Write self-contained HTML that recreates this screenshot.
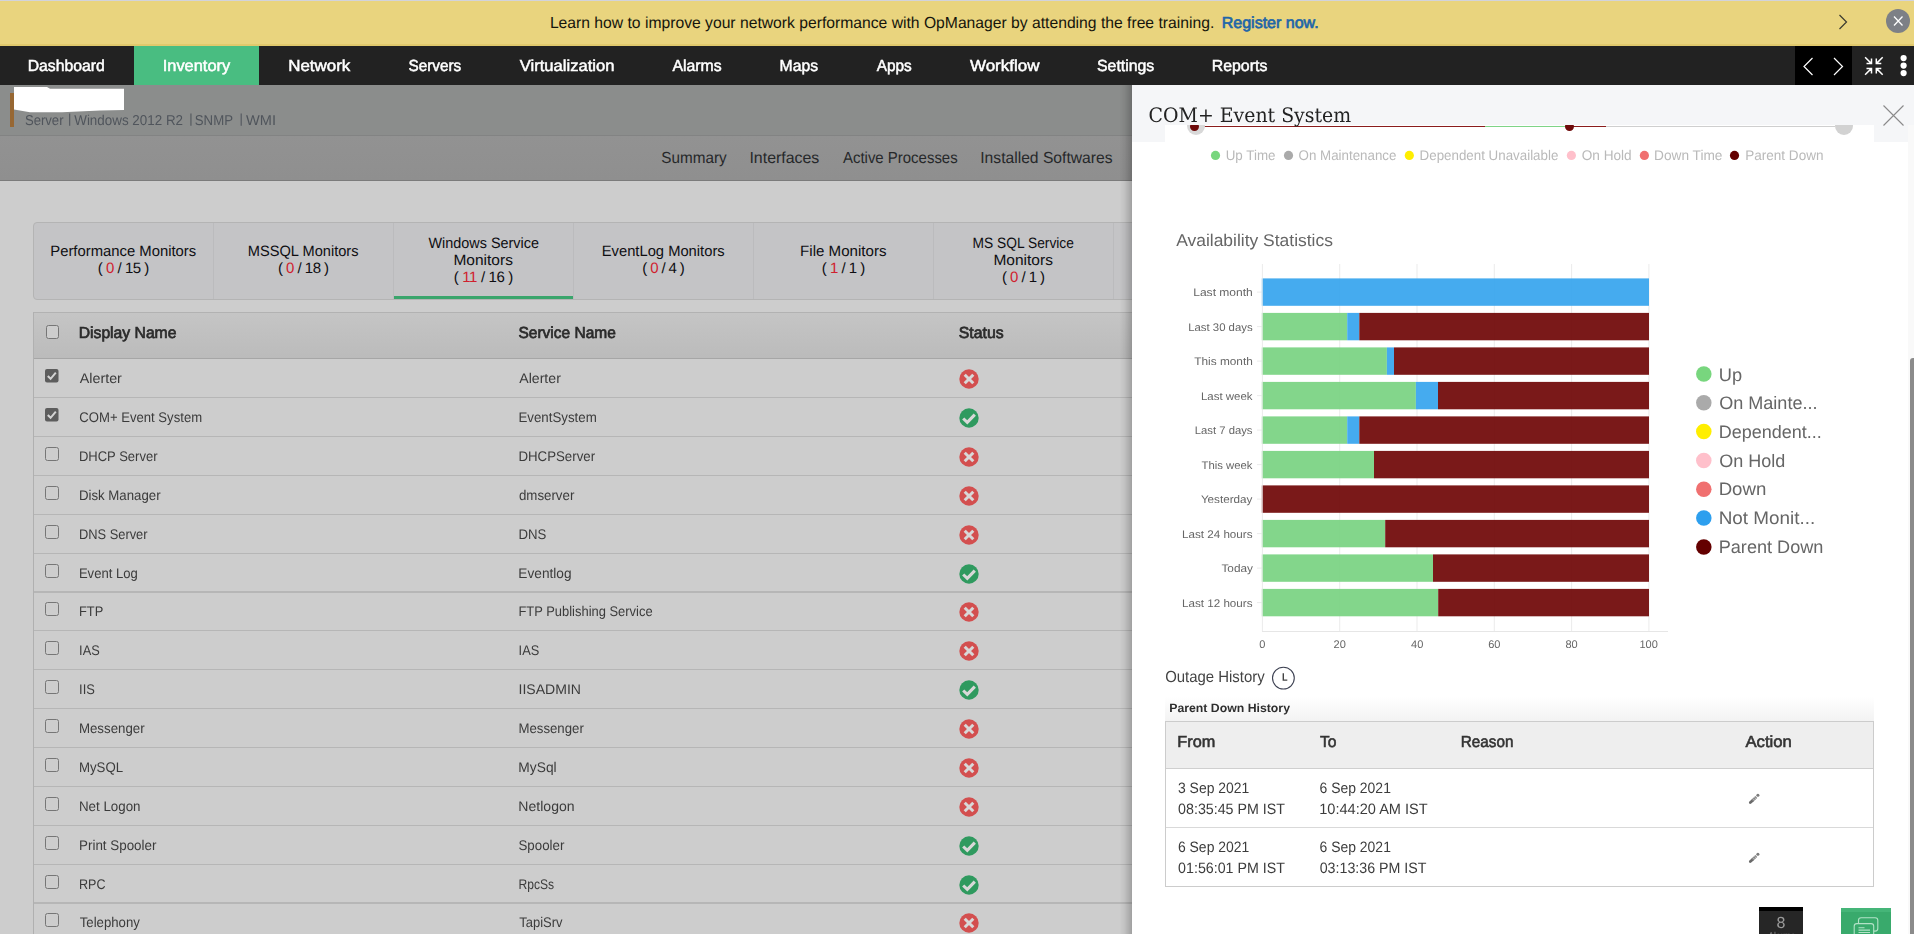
<!DOCTYPE html>
<html lang="en"><head><meta charset="utf-8"><title>OpManager - COM+ Event System</title>
<style>
html,body{margin:0;padding:0}
body{width:1914px;height:934px;overflow:hidden;position:relative;background:#cdcdcd;font-family:'Liberation Sans',sans-serif}
div,span,a,b,i,svg{position:absolute;box-sizing:border-box}
.g{left:0;top:0;width:0;height:0}
.gy{will-change:transform}
.t{white-space:pre;transform-origin:0 50%;text-rendering:geometricPrecision}
a{text-decoration:none}
</style></head><body>
<div class="g" id="banner">
<div style="left:0px;top:0px;width:1914px;height:1px;background:#d2d3db;"></div>
<div style="left:0px;top:1px;width:1914px;height:45px;background:#e9d47e;border-bottom:2px solid #e1c96c;"></div>
<span class="t" style="left:549px;top:16px;font-size:16px;line-height:16px;color:#15150c;transform:translateX(0.90px) scaleX(0.9803);">Learn how to improve your network performance with OpManager by attending the free training.</span>
<a class="t" style="left:1221.77px;top:16px;font-size:16px;line-height:16px;color:#1f66a8;-webkit-text-stroke:0.7px #1f66a8;">Register now.</a>
<svg style="left:1835px;top:12px" width="16" height="20" viewBox="0 0 16 20"><path d="M4.5 3 L11.5 10 L4.5 17" fill="none" stroke="#3a3a30" stroke-width="1.2"/></svg>
<div style="left:1886px;top:9px;width:24px;height:24px;border-radius:50%;background:#7d8086"></div>
<svg style="left:1886px;top:9px" width="24" height="24" viewBox="0 0 24 24"><path d="M8 7.5 L16.5 16.5 M16.5 7.5 L8 16.5" fill="none" stroke="#fff" stroke-width="1.3"/></svg>
</div>
<div class="g gy" id="nav">
<div style="left:0px;top:46px;width:1914px;height:39px;background:#222222;"></div>
<div style="left:134px;top:46px;width:125px;height:39px;background:#49bd81;"></div>
<div style="left:1795px;top:46px;width:57px;height:39px;background:#000;"></div>
<span class="t" style="left:27px;top:59px;font-size:16px;line-height:16px;color:#fff;transform:translateX(0.69px) scaleX(0.9841);-webkit-text-stroke:0.5px #fff;">Dashboard</span>
<span class="t" style="left:162px;top:59px;font-size:16px;line-height:16px;color:#fff;transform:translateX(0.69px) scaleX(1.0257);-webkit-text-stroke:0.5px #fff;">Inventory</span>
<span class="t" style="left:288px;top:59px;font-size:16px;line-height:16px;color:#fff;transform:translateX(0.19px) scaleX(1.0584);-webkit-text-stroke:0.5px #fff;">Network</span>
<span class="t" style="left:408px;top:59px;font-size:16px;line-height:16px;color:#fff;transform:translateX(0.42px) scaleX(0.9573);-webkit-text-stroke:0.5px #fff;">Servers</span>
<span class="t" style="left:519px;top:59px;font-size:16px;line-height:16px;color:#fff;transform:translateX(0.79px) scaleX(1.0360);-webkit-text-stroke:0.5px #fff;">Virtualization</span>
<span class="t" style="left:672px;top:59px;font-size:16px;line-height:16px;color:#fff;transform:translateX(0.44px) scaleX(0.9882);-webkit-text-stroke:0.5px #fff;">Alarms</span>
<span class="t" style="left:779px;top:59px;font-size:16px;line-height:16px;color:#fff;transform:translateX(0.60px) scaleX(0.9815);-webkit-text-stroke:0.5px #fff;">Maps</span>
<span class="t" style="left:876px;top:59px;font-size:16px;line-height:16px;color:#fff;transform:translateX(0.65px) scaleX(0.9606);-webkit-text-stroke:0.5px #fff;">Apps</span>
<span class="t" style="left:969px;top:59px;font-size:16px;line-height:16px;color:#fff;transform:translateX(0.94px) scaleX(1.0607);-webkit-text-stroke:0.5px #fff;">Workflow</span>
<span class="t" style="left:1096px;top:59px;font-size:16px;line-height:16px;color:#fff;transform:translateX(0.98px) scaleX(0.9911);-webkit-text-stroke:0.5px #fff;">Settings</span>
<span class="t" style="left:1211px;top:59px;font-size:16px;line-height:16px;color:#fff;transform:translateX(0.68px) scaleX(0.9935);-webkit-text-stroke:0.5px #fff;">Reports</span>
<svg style="left:1795px;top:46px" width="57" height="39" viewBox="0 0 57 39"><path d="M17.5 12 L9 20.5 L17.5 29 M39 12 L47.5 20.5 L39 29" fill="none" stroke="#fff" stroke-width="1.2"/></svg>
<svg style="left:1860px;top:52px" width="28" height="28" viewBox="1860 52 28 28"><path d="M1865.1 57.2 L1871.5 63.6 M1866.5 63.6 L1871.5 63.6 L1871.5 58.6 M1865.1 74.8 L1871.5 68.4 M1866.5 68.4 L1871.5 68.4 L1871.5 73.4 M1882.7 57.2 L1876.3 63.6 M1881.3 63.6 L1876.3 63.6 L1876.3 58.6 M1882.7 74.8 L1876.3 68.4 M1881.3 68.4 L1876.3 68.4 L1876.3 73.4 " fill="none" stroke="#fff" stroke-width="1.5"/></svg>
<svg style="left:1898px;top:52px" width="12" height="28" viewBox="1898 52 12 28"><circle cx="1903.6" cy="58.1" r="3.1" fill="#fff"/><circle cx="1903.6" cy="65.6" r="3.1" fill="#fff"/><circle cx="1903.6" cy="73.1" r="3.1" fill="#fff"/></svg>
</div>
<div class="g" id="devhead">
<div style="left:0px;top:85px;width:1132px;height:50px;background:#8b8d8c;"></div>
<div style="left:0px;top:135px;width:1132px;height:1px;background:#828383;"></div>
<div style="left:0px;top:136px;width:1132px;height:45px;background:linear-gradient(#929292,#8f8f8f);border-bottom:1px solid #7b7b7b;"></div>
<div style="left:10px;top:93px;width:4px;height:34px;background:#976733;"></div>
<svg style="left:10px;top:84px" width="120" height="32" viewBox="10 84 120 32"><path d="M14 87 L47 87 L50 88.7 L124 88.7 L124 110 L100 110.4 L62 112.2 L30 112.2 L14 109.6 Z" fill="#fff"/></svg>
<span class="t" style="left:24px;top:114px;font-size:14.3px;line-height:15px;color:#50555c;transform:translateX(0.90px) scaleX(0.9175);">Server</span>
<span class="t" style="left:68.00px;top:112px;font-size:13px;line-height:13px;color:#50555c;">|</span>
<span class="t" style="left:74px;top:114px;font-size:14.3px;line-height:15px;color:#50555c;transform:translateX(0.23px) scaleX(0.9378);">Windows 2012 R2</span>
<span class="t" style="left:189.20px;top:112px;font-size:13px;line-height:13px;color:#50555c;">|</span>
<span class="t" style="left:194px;top:114px;font-size:14.3px;line-height:15px;color:#50555c;transform:translateX(0.79px) scaleX(0.9245);">SNMP</span>
<span class="t" style="left:239.50px;top:112px;font-size:13px;line-height:13px;color:#50555c;">|</span>
<span class="t" style="left:245px;top:114px;font-size:14.3px;line-height:15px;color:#50555c;transform:translateX(1.00px) scaleX(1.0196);">WMI</span>
<span class="t" style="left:661px;top:151px;font-size:16px;line-height:16px;color:#26282a;transform:translateX(0.32px) scaleX(0.9545);">Summary</span>
<span class="t" style="left:749px;top:151px;font-size:16px;line-height:16px;color:#26282a;transform:translateX(0.43px) scaleX(0.9949);">Interfaces</span>
<span class="t" style="left:842px;top:151px;font-size:16px;line-height:16px;color:#26282a;transform:translateX(0.96px) scaleX(0.9346);">Active Processes</span>
<span class="t" style="left:980px;top:151px;font-size:16px;line-height:16px;color:#26282a;transform:translateX(0.26px) scaleX(0.9786);">Installed Softwares</span>
</div>
<div class="g" id="tabs">
<div style="left:33px;top:222px;width:1200px;height:78px;background:#c4c4c6;border:1px solid #b4b4b4;border-radius:4px;"></div>
<div style="left:213.0px;top:223px;width:1px;height:76px;background:#bbbbbd;"></div>
<div style="left:393.0px;top:223px;width:1px;height:76px;background:#bbbbbd;"></div>
<div style="left:573.0px;top:223px;width:1px;height:76px;background:#bbbbbd;"></div>
<div style="left:753.0px;top:223px;width:1px;height:76px;background:#bbbbbd;"></div>
<div style="left:933.0px;top:223px;width:1px;height:76px;background:#bbbbbd;"></div>
<div style="left:1113.0px;top:223px;width:1px;height:76px;background:#bbbbbd;"></div>
<div style="left:394px;top:296px;width:179px;height:3px;background:#3aa56c;"></div>
<span class="t" style="left:50px;top:244px;font-size:15px;line-height:15px;color:#0e0e12;transform:translateX(0.26px) scaleX(0.9887);">Performance Monitors</span>
<span class="t" style="left:97.85px;top:261px;font-size:15px;line-height:15px;color:#0e0e12;letter-spacing:-0.496px;">( <span style="position:static;color:#d0202e">0</span> / 15 )</span>
<span class="t" style="left:247px;top:244px;font-size:15px;line-height:15px;color:#0e0e12;transform:translateX(0.78px) scaleX(0.9742);">MSSQL Monitors</span>
<span class="t" style="left:278.00px;top:261px;font-size:15px;line-height:15px;color:#0e0e12;letter-spacing:-0.529px;">( <span style="position:static;color:#d0202e">0</span> / 18 )</span>
<span class="t" style="left:601px;top:244px;font-size:15px;line-height:15px;color:#0e0e12;transform:translateX(0.77px) scaleX(0.9826);">EventLog Monitors</span>
<span class="t" style="left:642.20px;top:261px;font-size:15px;line-height:15px;color:#0e0e12;letter-spacing:-0.616px;">( <span style="position:static;color:#d0202e">0</span> / 4 )</span>
<span class="t" style="left:800px;top:244px;font-size:15px;line-height:15px;color:#0e0e12;transform:translateX(0.08px) scaleX(1.0063);">File Monitors</span>
<span class="t" style="left:821.80px;top:261px;font-size:15px;line-height:15px;color:#0e0e12;letter-spacing:-0.516px;">( <span style="position:static;color:#d0202e">1</span> / 1 )</span>
<span class="t" style="left:428px;top:236px;font-size:15px;line-height:15px;color:#0e0e12;transform:translateX(0.46px) scaleX(0.9603);">Windows Service</span>
<span class="t" style="left:453px;top:253px;font-size:15px;line-height:15px;color:#0e0e12;transform:translateX(0.45px) scaleX(1.0333);">Monitors</span>
<span class="t" style="left:453.75px;top:270px;font-size:15px;line-height:15px;color:#0e0e12;letter-spacing:-0.350px;">( <span style="position:static;color:#d0202e">11</span> / 16 )</span>
<span class="t" style="left:972px;top:236px;font-size:15px;line-height:15px;color:#0e0e12;transform:translateX(0.60px) scaleX(0.9184);">MS SQL Service</span>
<span class="t" style="left:993px;top:253px;font-size:15px;line-height:15px;color:#0e0e12;transform:translateX(0.45px) scaleX(1.0333);">Monitors</span>
<span class="t" style="left:1001.90px;top:270px;font-size:15px;line-height:15px;color:#0e0e12;letter-spacing:-0.541px;">( <span style="position:static;color:#d0202e">0</span> / 1 )</span>
</div>
<div class="g gy" id="services">
<div style="left:33px;top:312px;width:1200px;height:47px;background:linear-gradient(#c5c5c5,#bbbbbb);border-top:1px solid #b2b2b2;border-bottom:1px solid #a6a6a6;"></div>
<div style="left:33px;top:312px;width:1px;height:622px;background:#b0b0b0;"></div>
<div style="left:45.5px;top:325px;width:13.5px;height:13.5px;border:1px solid #767676;border-radius:2.5px;background:#cdcdcd;"></div>
<span class="t" style="left:78px;top:326px;font-size:16px;line-height:16px;color:#2b2b2b;transform:translateX(0.70px) scaleX(0.9813);-webkit-text-stroke:0.7px #2b2b2b;">Display Name</span>
<span class="t" style="left:518px;top:326px;font-size:16px;line-height:16px;color:#2b2b2b;transform:translateX(0.40px) scaleX(0.9698);-webkit-text-stroke:0.7px #2b2b2b;">Service Name</span>
<span class="t" style="left:958px;top:326px;font-size:16px;line-height:16px;color:#2b2b2b;transform:translateX(0.78px) scaleX(0.9888);-webkit-text-stroke:0.7px #2b2b2b;">Status</span>
<div style="left:34px;top:397px;width:1200px;height:1px;background:#b6b6b6;"></div>
<div style="left:34px;top:436px;width:1200px;height:1px;background:#b6b6b6;"></div>
<div style="left:34px;top:475px;width:1200px;height:1px;background:#b6b6b6;"></div>
<div style="left:34px;top:514px;width:1200px;height:1px;background:#b6b6b6;"></div>
<div style="left:34px;top:553px;width:1200px;height:1px;background:#b6b6b6;"></div>
<div style="left:34px;top:591px;width:1200px;height:2px;background:#b6b6b6;"></div>
<div style="left:34px;top:630px;width:1200px;height:1px;background:#b6b6b6;"></div>
<div style="left:34px;top:669px;width:1200px;height:1px;background:#b6b6b6;"></div>
<div style="left:34px;top:708px;width:1200px;height:1px;background:#b6b6b6;"></div>
<div style="left:34px;top:747px;width:1200px;height:1px;background:#b6b6b6;"></div>
<div style="left:34px;top:786px;width:1200px;height:1px;background:#b6b6b6;"></div>
<div style="left:34px;top:825px;width:1200px;height:1px;background:#b6b6b6;"></div>
<div style="left:34px;top:864px;width:1200px;height:1px;background:#b6b6b6;"></div>
<div style="left:34px;top:902px;width:1200px;height:2px;background:#b6b6b6;"></div>
<svg style="left:45.3px;top:369px" width="14" height="14" viewBox="0 0 14 14"><rect x="0" y="0" width="13.5" height="13.5" rx="2" fill="#5d5d5d"/><path d="M2.8 7 L5.6 9.8 L10.8 3.6" fill="none" stroke="#d4d4d4" stroke-width="2"/></svg>
<span class="t" style="left:79px;top:371px;font-size:14px;line-height:14px;color:#3b3b3b;transform:translateX(0.75px) scaleX(1.0214);">Alerter</span>
<span class="t" style="left:519px;top:371px;font-size:14px;line-height:14px;color:#3b3b3b;transform:translateX(0.25px) scaleX(1.0090);">Alerter</span>
<svg style="left:958.8px;top:369px" width="20" height="20" viewBox="0 0 20 20"><circle cx="10" cy="10" r="9.7" fill="#d34f4f"/><path d="M5.7 5.7 L14.3 14.3 M14.3 5.7 L5.7 14.3" fill="none" stroke="#d8d8d8" stroke-width="3"/></svg>
<svg style="left:45.3px;top:408px" width="14" height="14" viewBox="0 0 14 14"><rect x="0" y="0" width="13.5" height="13.5" rx="2" fill="#5d5d5d"/><path d="M2.8 7 L5.6 9.8 L10.8 3.6" fill="none" stroke="#d4d4d4" stroke-width="2"/></svg>
<span class="t" style="left:79px;top:410px;font-size:14px;line-height:14px;color:#3b3b3b;transform:translateX(0.29px) scaleX(0.9368);">COM+ Event System</span>
<span class="t" style="left:518px;top:410px;font-size:14px;line-height:14px;color:#3b3b3b;transform:translateX(0.38px) scaleX(0.9502);">EventSystem</span>
<svg style="left:958.8px;top:408px" width="20" height="20" viewBox="0 0 20 20"><circle cx="10" cy="10" r="9.7" fill="#2f9a5f"/><path d="M4.2 10.5 L8.3 14.4 L15.8 6.7" fill="none" stroke="#d8d8d8" stroke-width="3.1"/></svg>
<div style="left:45.3px;top:447px;width:13.5px;height:13.5px;border:1px solid #767676;border-radius:2.5px;background:#cdcdcd;"></div>
<span class="t" style="left:78px;top:449px;font-size:14px;line-height:14px;color:#3b3b3b;transform:translateX(0.91px) scaleX(0.9299);">DHCP Server</span>
<span class="t" style="left:518px;top:449px;font-size:14px;line-height:14px;color:#3b3b3b;transform:translateX(0.38px) scaleX(0.9485);">DHCPServer</span>
<svg style="left:958.8px;top:447px" width="20" height="20" viewBox="0 0 20 20"><circle cx="10" cy="10" r="9.7" fill="#d34f4f"/><path d="M5.7 5.7 L14.3 14.3 M14.3 5.7 L5.7 14.3" fill="none" stroke="#d8d8d8" stroke-width="3"/></svg>
<div style="left:45.3px;top:486px;width:13.5px;height:13.5px;border:1px solid #767676;border-radius:2.5px;background:#cdcdcd;"></div>
<span class="t" style="left:78px;top:488px;font-size:14px;line-height:14px;color:#3b3b3b;transform:translateX(0.89px) scaleX(0.9458);">Disk Manager</span>
<span class="t" style="left:518px;top:488px;font-size:14px;line-height:14px;color:#3b3b3b;transform:translateX(0.90px) scaleX(0.9504);">dmserver</span>
<svg style="left:958.8px;top:486px" width="20" height="20" viewBox="0 0 20 20"><circle cx="10" cy="10" r="9.7" fill="#d34f4f"/><path d="M5.7 5.7 L14.3 14.3 M14.3 5.7 L5.7 14.3" fill="none" stroke="#d8d8d8" stroke-width="3"/></svg>
<div style="left:45.3px;top:525px;width:13.5px;height:13.5px;border:1px solid #767676;border-radius:2.5px;background:#cdcdcd;"></div>
<span class="t" style="left:78px;top:527px;font-size:14px;line-height:14px;color:#3b3b3b;transform:translateX(0.92px) scaleX(0.9189);">DNS Server</span>
<span class="t" style="left:518px;top:527px;font-size:14px;line-height:14px;color:#3b3b3b;transform:translateX(0.39px) scaleX(0.9421);">DNS</span>
<svg style="left:958.8px;top:525px" width="20" height="20" viewBox="0 0 20 20"><circle cx="10" cy="10" r="9.7" fill="#d34f4f"/><path d="M5.7 5.7 L14.3 14.3 M14.3 5.7 L5.7 14.3" fill="none" stroke="#d8d8d8" stroke-width="3"/></svg>
<div style="left:45.3px;top:564px;width:13.5px;height:13.5px;border:1px solid #767676;border-radius:2.5px;background:#cdcdcd;"></div>
<span class="t" style="left:78px;top:566px;font-size:14px;line-height:14px;color:#3b3b3b;transform:translateX(0.90px) scaleX(0.9338);">Event Log</span>
<span class="t" style="left:518px;top:566px;font-size:14px;line-height:14px;color:#3b3b3b;transform:translateX(0.35px) scaleX(0.9767);">Eventlog</span>
<svg style="left:958.8px;top:564px" width="20" height="20" viewBox="0 0 20 20"><circle cx="10" cy="10" r="9.7" fill="#2f9a5f"/><path d="M4.2 10.5 L8.3 14.4 L15.8 6.7" fill="none" stroke="#d8d8d8" stroke-width="3.1"/></svg>
<div style="left:45.3px;top:602px;width:13.5px;height:13.5px;border:1px solid #767676;border-radius:2.5px;background:#cdcdcd;"></div>
<span class="t" style="left:78px;top:604px;font-size:14px;line-height:14px;color:#3b3b3b;transform:translateX(0.92px) scaleX(0.9201);">FTP</span>
<span class="t" style="left:518px;top:604px;font-size:14px;line-height:14px;color:#3b3b3b;transform:translateX(0.41px) scaleX(0.9240);">FTP Publishing Service</span>
<svg style="left:958.8px;top:602px" width="20" height="20" viewBox="0 0 20 20"><circle cx="10" cy="10" r="9.7" fill="#d34f4f"/><path d="M5.7 5.7 L14.3 14.3 M14.3 5.7 L5.7 14.3" fill="none" stroke="#d8d8d8" stroke-width="3"/></svg>
<div style="left:45.3px;top:641px;width:13.5px;height:13.5px;border:1px solid #767676;border-radius:2.5px;background:#cdcdcd;"></div>
<span class="t" style="left:79px;top:643px;font-size:14px;line-height:14px;color:#3b3b3b;transform:translateX(0.09px) scaleX(0.9148);">IAS</span>
<span class="t" style="left:518px;top:643px;font-size:14px;line-height:14px;color:#3b3b3b;transform:translateX(0.59px) scaleX(0.9148);">IAS</span>
<svg style="left:958.8px;top:641px" width="20" height="20" viewBox="0 0 20 20"><circle cx="10" cy="10" r="9.7" fill="#d34f4f"/><path d="M5.7 5.7 L14.3 14.3 M14.3 5.7 L5.7 14.3" fill="none" stroke="#d8d8d8" stroke-width="3"/></svg>
<div style="left:45.3px;top:680px;width:13.5px;height:13.5px;border:1px solid #767676;border-radius:2.5px;background:#cdcdcd;"></div>
<span class="t" style="left:79px;top:682px;font-size:14px;line-height:14px;color:#3b3b3b;transform:translateX(0.08px) scaleX(0.9235);">IIS</span>
<span class="t" style="left:518px;top:682px;font-size:14px;line-height:14px;color:#3b3b3b;transform:translateX(0.50px) scaleX(1.0033);">IISADMIN</span>
<svg style="left:958.8px;top:680px" width="20" height="20" viewBox="0 0 20 20"><circle cx="10" cy="10" r="9.7" fill="#2f9a5f"/><path d="M4.2 10.5 L8.3 14.4 L15.8 6.7" fill="none" stroke="#d8d8d8" stroke-width="3.1"/></svg>
<div style="left:45.3px;top:719px;width:13.5px;height:13.5px;border:1px solid #767676;border-radius:2.5px;background:#cdcdcd;"></div>
<span class="t" style="left:78px;top:721px;font-size:14px;line-height:14px;color:#3b3b3b;transform:translateX(0.91px) scaleX(0.9491);">Messenger</span>
<span class="t" style="left:518px;top:721px;font-size:14px;line-height:14px;color:#3b3b3b;transform:translateX(0.41px) scaleX(0.9446);">Messenger</span>
<svg style="left:958.8px;top:719px" width="20" height="20" viewBox="0 0 20 20"><circle cx="10" cy="10" r="9.7" fill="#d34f4f"/><path d="M5.7 5.7 L14.3 14.3 M14.3 5.7 L5.7 14.3" fill="none" stroke="#d8d8d8" stroke-width="3"/></svg>
<div style="left:45.3px;top:758px;width:13.5px;height:13.5px;border:1px solid #767676;border-radius:2.5px;background:#cdcdcd;"></div>
<span class="t" style="left:78px;top:760px;font-size:14px;line-height:14px;color:#3b3b3b;transform:translateX(0.91px) scaleX(0.9452);">MySQL</span>
<span class="t" style="left:518px;top:760px;font-size:14px;line-height:14px;color:#3b3b3b;transform:translateX(0.37px) scaleX(0.9824);">MySql</span>
<svg style="left:958.8px;top:758px" width="20" height="20" viewBox="0 0 20 20"><circle cx="10" cy="10" r="9.7" fill="#d34f4f"/><path d="M5.7 5.7 L14.3 14.3 M14.3 5.7 L5.7 14.3" fill="none" stroke="#d8d8d8" stroke-width="3"/></svg>
<div style="left:45.3px;top:797px;width:13.5px;height:13.5px;border:1px solid #767676;border-radius:2.5px;background:#cdcdcd;"></div>
<span class="t" style="left:78px;top:799px;font-size:14px;line-height:14px;color:#3b3b3b;transform:translateX(0.90px) scaleX(0.9539);">Net Logon</span>
<span class="t" style="left:518px;top:799px;font-size:14px;line-height:14px;color:#3b3b3b;transform:translateX(0.34px) scaleX(1.0043);">Netlogon</span>
<svg style="left:958.8px;top:797px" width="20" height="20" viewBox="0 0 20 20"><circle cx="10" cy="10" r="9.7" fill="#d34f4f"/><path d="M5.7 5.7 L14.3 14.3 M14.3 5.7 L5.7 14.3" fill="none" stroke="#d8d8d8" stroke-width="3"/></svg>
<div style="left:45.3px;top:836px;width:13.5px;height:13.5px;border:1px solid #767676;border-radius:2.5px;background:#cdcdcd;"></div>
<span class="t" style="left:79px;top:838px;font-size:14px;line-height:14px;color:#3b3b3b;transform:translateX(0.02px) scaleX(0.9568);">Print Spooler</span>
<span class="t" style="left:518px;top:838px;font-size:14px;line-height:14px;color:#3b3b3b;transform:translateX(0.49px) scaleX(0.9502);">Spooler</span>
<svg style="left:958.8px;top:836px" width="20" height="20" viewBox="0 0 20 20"><circle cx="10" cy="10" r="9.7" fill="#2f9a5f"/><path d="M4.2 10.5 L8.3 14.4 L15.8 6.7" fill="none" stroke="#d8d8d8" stroke-width="3.1"/></svg>
<div style="left:45.3px;top:875px;width:13.5px;height:13.5px;border:1px solid #767676;border-radius:2.5px;background:#cdcdcd;"></div>
<span class="t" style="left:78px;top:877px;font-size:14px;line-height:14px;color:#3b3b3b;transform:translateX(0.95px) scaleX(0.8966);">RPC</span>
<span class="t" style="left:518px;top:877px;font-size:14px;line-height:14px;color:#3b3b3b;transform:translateX(0.48px) scaleX(0.8640);">RpcSs</span>
<svg style="left:958.8px;top:875px" width="20" height="20" viewBox="0 0 20 20"><circle cx="10" cy="10" r="9.7" fill="#2f9a5f"/><path d="M4.2 10.5 L8.3 14.4 L15.8 6.7" fill="none" stroke="#d8d8d8" stroke-width="3.1"/></svg>
<div style="left:45.3px;top:913px;width:13.5px;height:13.5px;border:1px solid #767676;border-radius:2.5px;background:#cdcdcd;"></div>
<span class="t" style="left:79px;top:915px;font-size:14px;line-height:14px;color:#3b3b3b;transform:translateX(0.71px) scaleX(0.9420);">Telephony</span>
<span class="t" style="left:519px;top:915px;font-size:14px;line-height:14px;color:#3b3b3b;transform:translateX(0.22px) scaleX(0.9272);">TapiSrv</span>
<svg style="left:958.8px;top:913px" width="20" height="20" viewBox="0 0 20 20"><circle cx="10" cy="10" r="9.7" fill="#d34f4f"/><path d="M5.7 5.7 L14.3 14.3 M14.3 5.7 L5.7 14.3" fill="none" stroke="#d8d8d8" stroke-width="3"/></svg>
</div>
<div class="g gy" id="panel">
<div style="left:1120px;top:85px;width:12px;height:849px;background:linear-gradient(90deg,rgba(0,0,0,0),rgba(0,0,0,0.06) 40%,rgba(0,0,0,0.22));"></div>
<div style="left:1132px;top:85px;width:782px;height:849px;background:#ffffff;"></div>
<div style="left:1194px;top:126px;width:291px;height:1px;background:#8a1c1c;"></div>
<div style="left:1485px;top:126px;width:85px;height:1px;background:#7fd487;"></div>
<div style="left:1570px;top:126px;width:36px;height:1px;background:#8a1c1c;"></div>
<div style="left:1606px;top:126px;width:229px;height:1px;background:#cfcfcf;"></div>
<div style="left:1187px;top:117px;width:18px;height:18px;background:#d8d8d8;border-radius:50%;"></div>
<div style="left:1189.5px;top:121.5px;width:9px;height:9px;background:#6e0a0a;border-radius:50%;"></div>
<div style="left:1564.5px;top:121.5px;width:9px;height:9px;background:#6e0a0a;border-radius:50%;"></div>
<div style="left:1835px;top:117px;width:18px;height:18px;background:#d2d2d2;border-radius:50%;"></div>
<div style="left:1132px;top:85px;width:782px;height:40px;background:#f5f6f8;"></div>
<div style="left:1132px;top:125px;width:33px;height:17px;background:#f5f6f8;"></div>
<div style="left:1874px;top:125px;width:34px;height:17px;background:#f5f6f8;"></div>
<div style="left:1908px;top:125px;width:6px;height:809px;background:#f9f9f9;"></div>
<div style="left:1910px;top:358px;width:4px;height:576px;background:#8b8b8b;border-radius:3px 0 0 0;"></div>
<span class="t" style="left:1148px;top:105px;font-size:20px;line-height:20px;color:#222;font-family:'DejaVu Serif', 'Liberation Serif', serif;transform:translateX(0.59px) scaleX(0.9449);">COM+ Event System</span>
<svg style="left:1882px;top:104px" width="23" height="23" viewBox="0 0 23 23"><path d="M1.5 1.5 L21.5 21.5 M21.5 1.5 L1.5 21.5" fill="none" stroke="#8a8a8a" stroke-width="1.1"/></svg>
<svg style="left:1200px;top:145px" width="560" height="20" viewBox="1200 145 560 20"><circle cx="1215.5" cy="155.4" r="4.6" fill="#78d67e"/><circle cx="1288.5" cy="155.4" r="4.6" fill="#aaaaaa"/><circle cx="1409.3" cy="155.4" r="4.6" fill="#ffee00"/><circle cx="1571.4" cy="155.4" r="4.6" fill="#ffc0cb"/><circle cx="1644.4" cy="155.4" r="4.6" fill="#f07070"/><circle cx="1734.5" cy="155.4" r="4.6" fill="#640000"/></svg>
<span class="t" style="left:1225px;top:148px;font-size:14px;line-height:14px;color:#b9b9b9;transform:translateX(0.72px) scaleX(0.9548);">Up Time</span>
<span class="t" style="left:1298px;top:148px;font-size:14px;line-height:14px;color:#b9b9b9;transform:translateX(0.54px) scaleX(0.9526);">On Maintenance</span>
<span class="t" style="left:1419px;top:148px;font-size:14px;line-height:14px;color:#b9b9b9;transform:translateX(0.58px) scaleX(0.9533);">Dependent Unavailable</span>
<span class="t" style="left:1581px;top:148px;font-size:14px;line-height:14px;color:#b9b9b9;transform:translateX(0.72px) scaleX(0.9727);">On Hold</span>
<span class="t" style="left:1654px;top:148px;font-size:14px;line-height:14px;color:#b9b9b9;transform:translateX(0.05px) scaleX(0.9763);">Down Time</span>
<span class="t" style="left:1745px;top:148px;font-size:14px;line-height:14px;color:#b9b9b9;transform:translateX(0.21px) scaleX(0.9671);">Parent Down</span>
<div class="g" id="chart">
<span class="t" style="left:1176px;top:232px;font-size:17px;line-height:17px;color:#666;transform:translateX(0.13px) scaleX(1.0267);">Availability Statistics</span>
<svg style="left:1160px;top:250px" width="520" height="400" viewBox="1160 250 520 400"><g fill="#ebebeb"><rect x="1261.9" y="264" width="1" height="367.5"/><rect x="1339.2" y="264" width="1" height="367.5"/><rect x="1416.5" y="264" width="1" height="367.5"/><rect x="1493.8" y="264" width="1" height="367.5"/><rect x="1571.1" y="264" width="1" height="367.5"/><rect x="1648.4" y="264" width="1" height="367.5"/><rect x="1262" y="631" width="406" height="1" fill="#e6e6e6"/><rect x="1257" y="291.6" width="4.5" height="1"/><rect x="1257" y="326.1" width="4.5" height="1"/><rect x="1257" y="360.6" width="4.5" height="1"/><rect x="1257" y="395.1" width="4.5" height="1"/><rect x="1257" y="429.6" width="4.5" height="1"/><rect x="1257" y="464.1" width="4.5" height="1"/><rect x="1257" y="498.6" width="4.5" height="1"/><rect x="1257" y="533.1" width="4.5" height="1"/><rect x="1257" y="567.6" width="4.5" height="1"/><rect x="1257" y="602.1" width="4.5" height="1"/></g><g opacity="0.93"><rect x="1261.7" y="278.4" width="0.9" height="27.4" fill="#37a5ee" opacity="0.5"/><rect x="1263.0" y="278.4" width="386.0" height="27.4" fill="#37a5ee"/><rect x="1261.7" y="312.9" width="0.9" height="27.4" fill="#7ad383" opacity="0.5"/><rect x="1263.0" y="312.9" width="84.2" height="27.4" fill="#7ad383"/><rect x="1347.2" y="312.9" width="12.1" height="27.4" fill="#37a5ee"/><rect x="1359.3" y="312.9" width="289.7" height="27.4" fill="#700808"/><rect x="1261.7" y="347.4" width="0.9" height="27.4" fill="#7ad383" opacity="0.5"/><rect x="1263.0" y="347.4" width="123.9" height="27.4" fill="#7ad383"/><rect x="1386.9" y="347.4" width="7.1" height="27.4" fill="#37a5ee"/><rect x="1394.0" y="347.4" width="255.0" height="27.4" fill="#700808"/><rect x="1261.7" y="381.9" width="0.9" height="27.4" fill="#7ad383" opacity="0.5"/><rect x="1263.0" y="381.9" width="152.9" height="27.4" fill="#7ad383"/><rect x="1415.9" y="381.9" width="22.1" height="27.4" fill="#37a5ee"/><rect x="1438.0" y="381.9" width="211.0" height="27.4" fill="#700808"/><rect x="1261.7" y="416.4" width="0.9" height="27.4" fill="#7ad383" opacity="0.5"/><rect x="1263.0" y="416.4" width="84.2" height="27.4" fill="#7ad383"/><rect x="1347.2" y="416.4" width="12.1" height="27.4" fill="#37a5ee"/><rect x="1359.3" y="416.4" width="289.7" height="27.4" fill="#700808"/><rect x="1261.7" y="450.9" width="0.9" height="27.4" fill="#7ad383" opacity="0.5"/><rect x="1263.0" y="450.9" width="111.0" height="27.4" fill="#7ad383"/><rect x="1374.0" y="450.9" width="275.0" height="27.4" fill="#700808"/><rect x="1261.7" y="485.4" width="0.9" height="27.4" fill="#700808" opacity="0.5"/><rect x="1263.0" y="485.4" width="386.0" height="27.4" fill="#700808"/><rect x="1261.7" y="519.9" width="0.9" height="27.4" fill="#7ad383" opacity="0.5"/><rect x="1263.0" y="519.9" width="122.2" height="27.4" fill="#7ad383"/><rect x="1385.2" y="519.9" width="263.8" height="27.4" fill="#700808"/><rect x="1261.7" y="554.4" width="0.9" height="27.4" fill="#7ad383" opacity="0.5"/><rect x="1263.0" y="554.4" width="170.0" height="27.4" fill="#7ad383"/><rect x="1433.0" y="554.4" width="216.0" height="27.4" fill="#700808"/><rect x="1261.7" y="588.9" width="0.9" height="27.4" fill="#7ad383" opacity="0.5"/><rect x="1263.0" y="588.9" width="175.2" height="27.4" fill="#7ad383"/><rect x="1438.2" y="588.9" width="210.8" height="27.4" fill="#700808"/></g></svg>
<span class="t" style="left:1193px;top:288px;font-size:11px;line-height:11px;color:#666;transform:translateX(0.20px) scaleX(1.0954);">Last month</span>
<span class="t" style="left:1188px;top:323px;font-size:11px;line-height:11px;color:#666;transform:translateX(0.17px) scaleX(1.0333);">Last 30 days</span>
<span class="t" style="left:1194px;top:357px;font-size:11px;line-height:11px;color:#666;transform:translateX(0.24px) scaleX(1.0761);">This month</span>
<span class="t" style="left:1200px;top:392px;font-size:11px;line-height:11px;color:#666;transform:translateX(0.96px) scaleX(1.0418);">Last week</span>
<span class="t" style="left:1194px;top:426px;font-size:11px;line-height:11px;color:#666;transform:translateX(0.77px) scaleX(1.0260);">Last 7 days</span>
<span class="t" style="left:1201px;top:461px;font-size:11px;line-height:11px;color:#666;transform:translateX(0.55px) scaleX(1.0297);">This week</span>
<span class="t" style="left:1200px;top:495px;font-size:11px;line-height:11px;color:#666;transform:translateX(0.89px) scaleX(1.0626);">Yesterday</span>
<span class="t" style="left:1181px;top:530px;font-size:11px;line-height:11px;color:#666;transform:translateX(0.94px) scaleX(1.0587);">Last 24 hours</span>
<span class="t" style="left:1221px;top:564px;font-size:11px;line-height:11px;color:#666;transform:translateX(0.44px) scaleX(1.0704);">Today</span>
<span class="t" style="left:1181px;top:599px;font-size:11px;line-height:11px;color:#666;transform:translateX(0.94px) scaleX(1.0587);">Last 12 hours</span>
<span class="t" style="left:1259.29px;top:640px;font-size:11px;line-height:11px;color:#666;">0</span>
<span class="t" style="left:1333.54px;top:640px;font-size:11px;line-height:11px;color:#666;">20</span>
<span class="t" style="left:1411.03px;top:640px;font-size:11px;line-height:11px;color:#666;">40</span>
<span class="t" style="left:1488.14px;top:640px;font-size:11px;line-height:11px;color:#666;">60</span>
<span class="t" style="left:1565.46px;top:640px;font-size:11px;line-height:11px;color:#666;">80</span>
<span class="t" style="left:1639.47px;top:640px;font-size:11px;line-height:11px;color:#666;">100</span>
<svg style="left:1690px;top:360px" width="28" height="200" viewBox="1690 360 28 200"><circle cx="1703.8" cy="373.9" r="7.75" fill="#78d67e"/><circle cx="1703.8" cy="402.8" r="7.75" fill="#aaaaaa"/><circle cx="1703.8" cy="431.6" r="7.75" fill="#ffee00"/><circle cx="1703.8" cy="460.4" r="7.75" fill="#ffc0cb"/><circle cx="1703.8" cy="489.3" r="7.75" fill="#f07070"/><circle cx="1703.8" cy="518.1" r="7.75" fill="#2d9fee"/><circle cx="1703.8" cy="547.0" r="7.75" fill="#640000"/></svg>
<span class="t" style="left:1718px;top:366px;font-size:18px;line-height:18px;color:#666;transform:translateX(0.78px) scaleX(1.0138);">Up</span>
<span class="t" style="left:1719px;top:394px;font-size:18px;line-height:18px;color:#666;transform:translateX(0.20px) scaleX(1.0026);">On Mainte...</span>
<span class="t" style="left:1718.70px;top:423px;font-size:18px;line-height:18px;color:#666;">Dependent...</span>
<span class="t" style="left:1719.20px;top:452px;font-size:18px;line-height:18px;color:#666;">On Hold</span>
<span class="t" style="left:1718px;top:480px;font-size:18px;line-height:18px;color:#666;transform:translateX(0.65px) scaleX(1.0362);">Down</span>
<span class="t" style="left:1718px;top:509px;font-size:18px;line-height:18px;color:#666;transform:translateX(0.63px) scaleX(1.0489);">Not Monit...</span>
<span class="t" style="left:1718px;top:538px;font-size:18px;line-height:18px;color:#666;transform:translateX(0.70px) scaleX(1.0066);">Parent Down</span>
</div>
<div class="g" id="outage">
<span class="t" style="left:1165px;top:670px;font-size:16px;line-height:16px;color:#444;transform:translateX(0.16px) scaleX(0.9324);">Outage History</span>
<svg style="left:1270px;top:665px" width="27" height="27" viewBox="1270 665 27 27"><circle cx="1283.4" cy="678.1" r="10.9" fill="#fff" stroke="#3d4152" stroke-width="1.1"/><path d="M1283.3 673.2 V680.1 H1287.3" fill="none" stroke="#444" stroke-width="1.4"/></svg>
<div style="left:1165px;top:696px;width:709px;height:25px;background:linear-gradient(#ffffff,#f3f3f3);"></div>
<span class="t" style="left:1169px;top:702px;font-size:12px;line-height:12px;color:#2e2e2e;font-weight:700;transform:translateX(0.19px) scaleX(1.0235);">Parent Down History</span>
<div style="left:1165px;top:721px;width:709px;height:166px;background:#fff;border:1px solid #ccc;"></div>
<div style="left:1166px;top:722px;width:707px;height:47px;background:#eeeeee;border-bottom:1px solid #cfcfcf;"></div>
<div style="left:1166px;top:827px;width:707px;height:1px;background:#d9d9d9;"></div>
<span class="t" style="left:1177px;top:735px;font-size:16px;line-height:16px;color:#333;transform:translateX(0.35px) scaleX(1.0158);-webkit-text-stroke:0.58px #333;">From</span>
<span class="t" style="left:1319px;top:735px;font-size:16px;line-height:16px;color:#333;transform:translateX(0.94px) scaleX(0.9796);-webkit-text-stroke:0.58px #333;">To</span>
<span class="t" style="left:1460px;top:735px;font-size:16px;line-height:16px;color:#333;transform:translateX(0.83px) scaleX(0.9530);-webkit-text-stroke:0.58px #333;">Reason</span>
<span class="t" style="left:1745px;top:735px;font-size:16px;line-height:16px;color:#333;transform:translateX(0.43px) scaleX(1.0441);-webkit-text-stroke:0.58px #333;">Action</span>
<span class="t" style="left:1177px;top:781px;font-size:15px;line-height:15px;color:#3c3c3c;transform:translateX(0.99px) scaleX(0.9291);">3 Sep 2021</span>
<span class="t" style="left:1178px;top:802px;font-size:15px;line-height:15px;color:#3c3c3c;transform:translateX(0.10px) scaleX(0.9490);">08:35:45 PM IST</span>
<span class="t" style="left:1319px;top:781px;font-size:15px;line-height:15px;color:#3c3c3c;transform:translateX(0.54px) scaleX(0.9297);">6 Sep 2021</span>
<span class="t" style="left:1319px;top:802px;font-size:15px;line-height:15px;color:#3c3c3c;transform:translateX(0.17px) scaleX(0.9713);">10:44:20 AM IST</span>
<span class="t" style="left:1177px;top:840px;font-size:15px;line-height:15px;color:#3c3c3c;transform:translateX(0.94px) scaleX(0.9297);">6 Sep 2021</span>
<span class="t" style="left:1178px;top:861px;font-size:15px;line-height:15px;color:#3c3c3c;transform:translateX(0.10px) scaleX(0.9490);">01:56:01 PM IST</span>
<span class="t" style="left:1319px;top:840px;font-size:15px;line-height:15px;color:#3c3c3c;transform:translateX(0.54px) scaleX(0.9297);">6 Sep 2021</span>
<span class="t" style="left:1319px;top:861px;font-size:15px;line-height:15px;color:#3c3c3c;transform:translateX(0.70px) scaleX(0.9490);">03:13:36 PM IST</span>
<svg style="left:1745px;top:790px" width="18" height="18" viewBox="1745 790 18 18"><path d="M1750.3 802.6 L1752.6 800.4" stroke="#6a6a6a" stroke-width="2.7" stroke-linecap="round" fill="none"/><path d="M1752.4 800.6 L1756.3 797" stroke="#858585" stroke-width="2.8" fill="none"/><path d="M1753 798.6 L1754.9 800.6 M1754.5 797.3 L1756.3 799.2" stroke="#fff" stroke-width="0.5" fill="none"/><circle cx="1757.9" cy="795.3" r="1.55" fill="#7a7a7a"/></svg>
<svg style="left:1745px;top:849px" width="18" height="18" viewBox="1745 790 18 18"><path d="M1750.3 802.6 L1752.6 800.4" stroke="#6a6a6a" stroke-width="2.7" stroke-linecap="round" fill="none"/><path d="M1752.4 800.6 L1756.3 797" stroke="#858585" stroke-width="2.8" fill="none"/><path d="M1753 798.6 L1754.9 800.6 M1754.5 797.3 L1756.3 799.2" stroke="#fff" stroke-width="0.5" fill="none"/><circle cx="1757.9" cy="795.3" r="1.55" fill="#7a7a7a"/></svg>
</div>
<div style="left:1759.3px;top:907px;width:43.6px;height:30px;background:#262626;border-top:4px solid #000;"></div>
<span class="t" style="left:1776.55px;top:916px;font-size:16px;line-height:16px;color:#9a9a9a;">8</span>
<span class="t" style="left:1768px;top:932px;font-size:10px;line-height:10px;color:#8a8a8a;transform:translateX(0.26px) scaleX(0.8682);">Alarms</span>
<div style="left:1841px;top:908px;width:50px;height:30px;background:#39aa6c;border-top:4px solid #45b578;"></div>
<svg style="left:1850px;top:914px" width="32" height="24" viewBox="1850 914 32 24"><g fill="none" stroke="#b3e2c7" stroke-width="1.1"><rect x="1858.5" y="917.7" width="19.3" height="13.4" rx="2.6"/><rect x="1854.2" y="923.6" width="19.5" height="14" rx="2.6" fill="#39aa6c"/><path d="M1858.5 927.7 H1864.5 M1858.5 930.1 H1870 M1858.5 932.5 H1870"/></g></svg>
</div>
</body></html>
